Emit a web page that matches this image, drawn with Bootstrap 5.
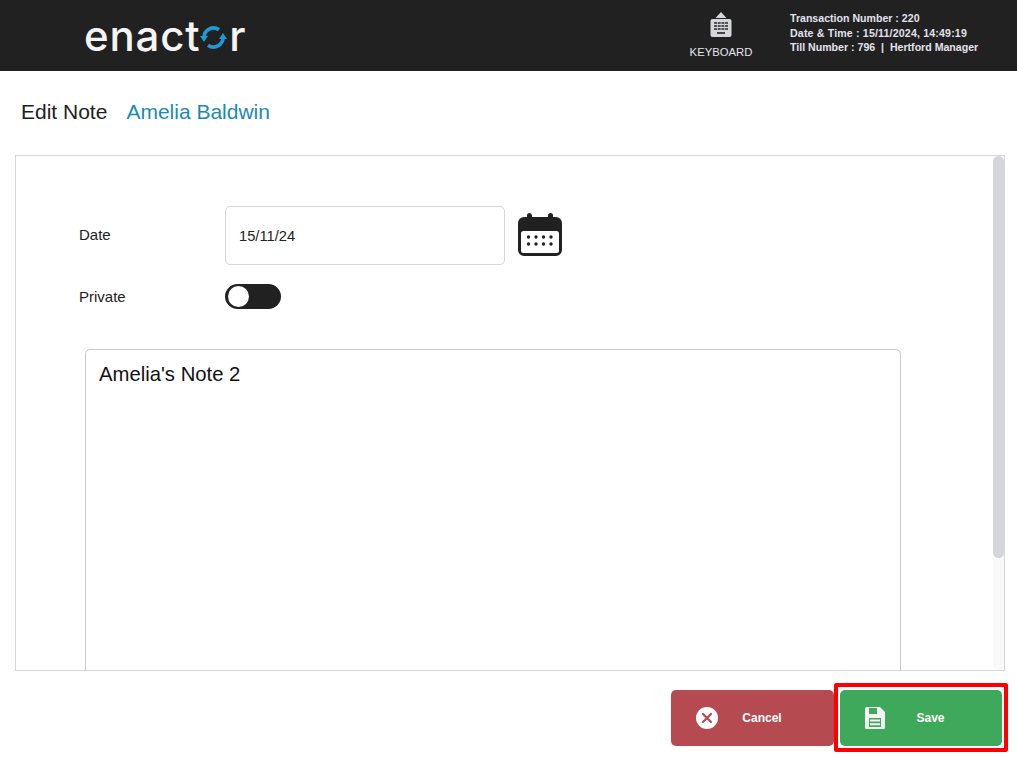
<!DOCTYPE html>
<html lang="en">
<head>
  <meta charset="UTF-8">
  <meta name="viewport" content="width=device-width, initial-scale=1">
  <title>Edit Note</title>
  <link href="https://cdn.jsdelivr.net/npm/bootstrap@5.3.0/dist/css/bootstrap.min.css" rel="stylesheet">
  <style>
    html, body { height: 100%; }
    body { font-family: "Liberation Sans", Arial, sans-serif; color: #212121; background: #fff; overflow: hidden; }
    /* header */
    .pos-header { height: 71px; background: #212121; color: #e3e3ee; }
    .pos-logo { margin-left: 84px; color: #f4f4f4; font-family: Inter, sans-serif; font-weight: 500; font-size: 42px; line-height: 71px; height: 71px; letter-spacing: .8px; }
    .pos-logo svg { width: 27px; height: 25px; margin: 4px 2px 0 0; }
    .kbd-btn { width: 76px; margin-right: 31px; padding-top: 12px; font-size: 11.3px; line-height: 13px; }
    .kbd-btn svg { width: 22px; height: 25px; display: block; margin: 0 auto 9px; }
    .trans-info { width: 227px; padding-top: 11px; font-size: 10.6px; line-height: 14.5px; font-weight: 700; }
    .trans-date { letter-spacing: .17px; }
    /* title */
    .page-title { height: 81px; margin-bottom: 3px; padding-left: 21px; font-size: 21px; }
    .page-title .cust-name { color: #1b8ab5; margin-left: 19px; }
    /* panel */
    .note-panel { position: relative; height: 516px; margin: 0 12px 0 15px; border: 1px solid #d5d5dc; overflow: hidden; }
    .scroll-track { position: absolute; top: 0; right: 0; bottom: 0; width: 11px; background: #f9f9f9; border-radius: 6px; }
    .scroll-thumb { height: 402px; background: #d5d5dc; border-radius: 6px; }
    .note-form { padding: 50px 0 0 63px; }
    .field-label { width: 146px; font-size: 15px; color: #212121; }
    .date-input { width: 280px; height: 59px; border: 1px solid #d5d5dc; border-radius: 5px; padding: 1px 13px 0; font-size: 14.7px; line-height: 57px; }
    .cal-icon { width: 44px; height: 43px; margin-left: 13px; margin-top: -3px; }
    .private-row { margin-top: 19px; }
    .private-row .field-label { padding-top: 2px; }
    .toggle-track { width: 56px; height: 25px; border-radius: 13px; background: #212121; padding: 2px; }
    .toggle-knob { width: 21px; height: 21px; margin-left: 1px; border-radius: 50%; background: #fff; }
    .note-area { width: 816px; height: 500px; margin: 40px 0 0 6px; border: 1px solid #c8c8c8; border-radius: 5px; padding: 11px 13px; font-size: 20.3px; line-height: 26px; color: #111; }
    /* footer buttons */
    .action-bar { padding: 12px 9px 0 0; }
    .act-btn { height: 56px; width: 163px; border: 0; border-radius: 5px; color: #fff; font-size: 12px; font-weight: 700; padding: 0 0 0 25px; }
    .act-btn svg { flex: none; }
    .act-btn .act-label { flex: 1; text-align: center; padding-right: 28px; }
    .act-cancel { background: #b54b51; margin: 7px 0 0 0; }
    .act-save { background: #3fa95b; width: 162px; }
    .act-save .act-label { padding-right: 26px; }
    .save-outline { border: 4px solid #f00; border-radius: 2px; padding: 3px 2px 2px; margin-left: 0; }
  </style>
</head>
<body>
  <div class="pos-header d-flex">
    <div class="pos-logo d-flex align-items-center me-auto">enact<svg viewBox="0 0 27 25"><path d="M4 12.500a9.500 9.500 0 0 1 15-7.700" fill="none" stroke="#1f9ad6" stroke-width="3.600"/><path d="M23 12.500a9.500 9.500 0 0 1-15 7.700" fill="none" stroke="#1f9ad6" stroke-width="3.600"/><path d="M0 11h8l-4 6zM19 14h8l-4-6z" fill="#1f9ad6"/></svg>r</div>
    <div class="kbd-btn text-center">
      <svg viewBox="0 0 22 25"><path d="M11 0l5.500 6h-11z" fill="#d5d5dc"/><rect x="0.500" y="7" width="21" height="18" rx="2" fill="#d5d5dc"/><path d="M4 11h14M4 14h14M4 17h14" stroke="#555" stroke-width="2" stroke-dasharray="3 .7"/><rect x="7" y="20" width="8" height="2" fill="#444"/></svg>
      KEYBOARD
    </div>
    <div class="trans-info">
      <div>Transaction Number : 220</div>
      <div class="trans-date">Date &amp; Time : 15/11/2024, 14:49:19</div>
      <div>Till Number : 796 &nbsp;|&nbsp; Hertford Manager</div>
    </div>
  </div>

  <div class="page-title d-flex align-items-center">
    <span>Edit Note</span><span class="cust-name">Amelia Baldwin</span>
  </div>

  <div class="note-panel">
    <div class="note-form">
      <div class="d-flex align-items-center">
        <div class="field-label">Date</div>
        <div class="date-input">15/11/24</div>
        <svg class="cal-icon" viewBox="0 0 44 43"><path d="M9 2.500a2.500 2.500 0 0 1 5 0V4h16V2.500a2.500 2.500 0 0 1 5 0V4h3a6 6 0 0 1 6 6v27a6 6 0 0 1-6 6H6a6 6 0 0 1-6-6V10a6 6 0 0 1 6-6h3z" fill="#212121"/><rect x="3" y="18" width="38" height="22" rx="2.500" fill="#fff"/><g fill="#212121"><circle cx="10.500" cy="24" r="1.700"/><circle cx="18" cy="24" r="1.700"/><circle cx="25.500" cy="24" r="1.700"/><circle cx="33" cy="24" r="1.700"/><circle cx="10.500" cy="31" r="1.700"/><circle cx="18" cy="31" r="1.700"/><circle cx="25.500" cy="31" r="1.700"/><circle cx="33" cy="31" r="1.700"/></g></svg>
      </div>
      <div class="private-row d-flex align-items-center">
        <div class="field-label">Private</div>
        <div class="toggle-track"><div class="toggle-knob"></div></div>
      </div>
      <div class="note-area">Amelia's Note 2</div>
    </div>
    <div class="scroll-track"><div class="scroll-thumb"></div></div>
  </div>

  <div class="action-bar d-flex justify-content-end align-items-start">
    <button class="act-btn act-cancel d-flex align-items-center">
      <svg width="22" height="22" viewBox="0 0 22 22"><circle cx="11" cy="11" r="11" fill="#fff"/><path d="M7 7l8 8M15 7l-8 8" stroke="#b54b51" stroke-width="2.200" stroke-linecap="round"/></svg>
      <span class="act-label">Cancel</span>
    </button>
    <div class="save-outline">
      <button class="act-btn act-save d-flex align-items-center">
        <svg width="20" height="22" viewBox="0 0 20 22"><path fill-rule="evenodd" d="M1.500 0H15l5 5v15.500a1.500 1.500 0 0 1-1.500 1.500h-17A1.500 1.500 0 0 1 0 20.500v-19A1.500 1.500 0 0 1 1.500 0zM4 1v6h8V1zM4 11v9h12v-9z" fill="#f4f4f4"/><path d="M5 13.500h10M5 17.200h10" stroke="#f4f4f4" stroke-width="2"/></svg>
        <span class="act-label">Save</span>
      </button>
    </div>
  </div>

  <script src="https://cdn.jsdelivr.net/npm/bootstrap@5.3.0/dist/js/bootstrap.bundle.min.js"></script>
</body>
</html>
